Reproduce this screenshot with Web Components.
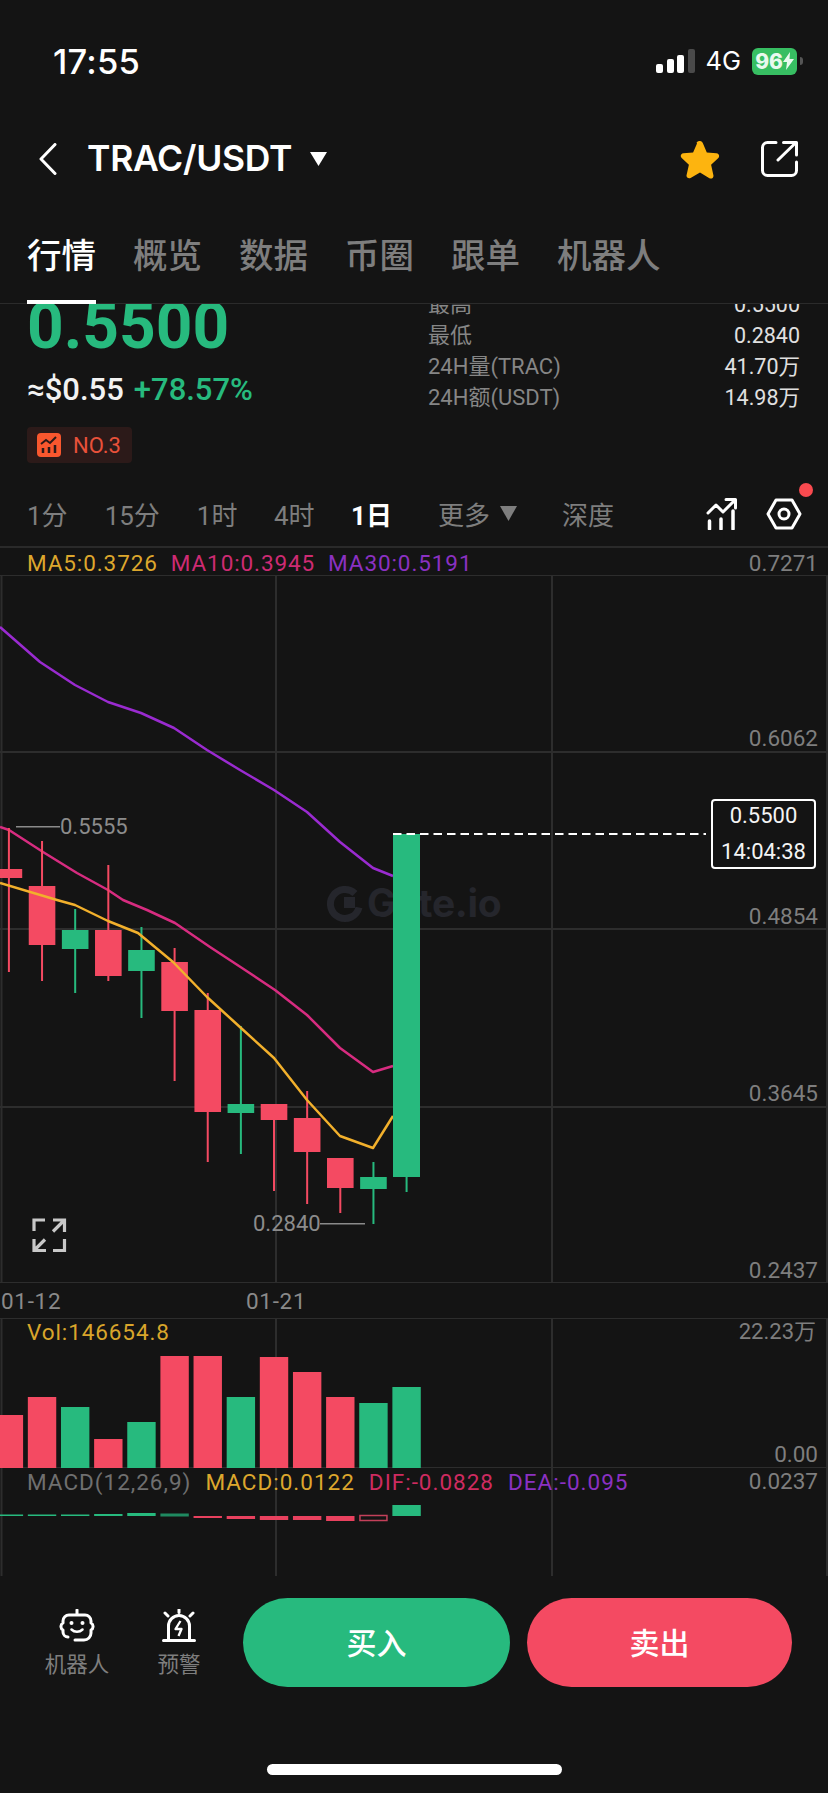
<!DOCTYPE html>
<html lang="zh">
<head>
<meta charset="utf-8">
<title>TRAC/USDT</title>
<style>
html,body{margin:0;padding:0;background:#141414}
body{width:828px;height:1793px;overflow:hidden;font-family:Roboto,"Noto Sans CJK SC",sans-serif;color:#fff}
</style>
</head>
<body>
<app-screen>
  <status-bar></status-bar>
  <nav-bar pair="TRAC/USDT"></nav-bar>
  <tab-bar></tab-bar>
  <price-head></price-head>
  <period-bar></period-bar>
  <ma-legend></ma-legend>
  <main-chart></main-chart>
  <date-axis></date-axis>
  <vol-chart></vol-chart>
  <macd-chart></macd-chart>
  <action-bar></action-bar>
  <home-bar></home-bar>
</app-screen>
<script>
const RED='#F44A62',GREEN='#27BA7E',GRID='#2D2D2D';
const CX=i=>8.9+33.14*i;
function def(name,html,after){
  customElements.define(name,class extends HTMLElement{
    connectedCallback(){
      if(this.shadowRoot)return;
      const r=this.attachShadow({mode:'open'});
      r.innerHTML=html;
      if(after)after(r,this);
    }
  });
}
const grid=(h,ys=[])=>{
  let s='';
  [1.5,276,552,827].forEach(x=>s+=`<rect x="${x-1}" y="0" width="2" height="${h}" fill="${GRID}"/>`);
  ys.forEach(y=>s+=`<rect x="0" y="${y-1}" width="828" height="2" fill="${GRID}"/>`);
  return s;
};
const poly=(pts,c)=>`<polyline fill="none" stroke="${c}" stroke-width="2.500" stroke-linejoin="round" points="${pts.map(p=>p.join(',')).join(' ')}"/>`;

def('app-screen',`<style>:host{display:flex;flex-direction:column;width:828px;height:1793px;background:#141414;overflow:hidden}</style><slot></slot>`);

def('status-bar',`<style>
:host{display:flex;align-items:center;justify-content:space-between;height:108px;padding:14px 25px 0 53px;box-sizing:border-box;font-family:Inter,sans-serif;color:#fff}
.t{font-size:34.500px;font-weight:500;letter-spacing:.2px}
.r{display:flex;align-items:center;gap:0}
.sig{display:flex;align-items:flex-end;gap:3.5px;height:24px;margin-right:11px}
.sig i{display:block;width:7px;border-radius:2px;background:#fff}
.g{font-size:25.5px;font-weight:400;margin-right:11px;line-height:24px}
.bat{width:45px;height:27px;border-radius:6px;background:#37BE62;display:flex;align-items:center;justify-content:center;font-size:21px;font-weight:800;color:#e9f9ee;gap:0;letter-spacing:-.2px}
.nub{width:3px;height:8px;background:#555;border-radius:0 3px 3px 0;margin-left:3px}
</style>
<span class="t">17:55</span>
<div class="r">
<div class="sig"><i style="height:9px"></i><i style="height:14px"></i><i style="height:18px"></i><i style="height:24px;background:#4a4a4a"></i></div>
<span class="g">4G</span>
<div class="bat">96<svg width="11" height="18" viewBox="0 0 11 18"><path d="M7 0 0 10h4l-1 8 8-11H6.500z" fill="#e9f9ee"/></svg></div><span class="nub"></span>
</div>`);

def('nav-bar',`<style>
:host{display:flex;align-items:center;height:104px;padding:0 30px 2px 39px;box-sizing:border-box}
.ttl{font-family:Inter,sans-serif;font-size:35.500px;font-weight:600;margin:0 18px 0 30px;letter-spacing:-.3px;line-height:40px}
.sp{flex:1}
svg{display:block}
</style>
<svg width="18" height="32" viewBox="0 0 18 32"><path d="M16 1.500 2 16l14 14.500" fill="none" stroke="#fff" stroke-width="3" stroke-linecap="round" stroke-linejoin="round"/></svg>
<span class="ttl"></span>
<svg width="17" height="14" viewBox="0 0 17 14"><path d="M0 0h17L8.500 14z" fill="#fff"/></svg>
<span class="sp"></span>
<svg width="40" height="39" viewBox="0 0 40 39" style="margin-right:41px"><path d="M20 1c1.500 0 2.400 1 3 2.400l3.800 9 9.600.9c2.700.3 3.700 3 1.700 4.900l-7 6.500 2.300 10.600c.5 2.700-2 4-4 2.900L20 32.500 10.600 38c-2.200 1.100-4.600-.5-4-2.900l2.300-10.400-7.200-6.600c-1.800-1.800-.9-4.600 1.700-4.800l9.700-.9 3.900-9C15.600 2 18.500 1 20 1z" fill="#FDB40F"/></svg>
<svg width="37" height="36" viewBox="0 0 37 36"><path d="M15 1.500H6.500a5 5 0 0 0-5 5v23a5 5 0 0 0 5 5h24a5 5 0 0 0 5-5V21" fill="none" stroke="#fff" stroke-width="3" stroke-linecap="round"/><path d="M17 19 35 1.500M22.500 1.500H35.500V14" fill="none" stroke="#fff" stroke-width="3" stroke-linecap="round" stroke-linejoin="round"/></svg>`,
(r,h)=>{r.querySelector('.ttl').textContent=h.getAttribute('pair')});

def('tab-bar',`<style>
:host{display:flex;gap:37px;height:92px;padding:0 0 0 27px;box-sizing:border-box;border-bottom:1px solid #2b2b2b;font-size:34.500px;font-weight:500;color:#7e7e7e;font-family:"Noto Sans CJK SC",sans-serif;position:relative;z-index:2;background:#141414}
span{display:block;line-height:50px;padding-top:16px;height:76px;position:relative;white-space:nowrap}
.on{color:#fff}
.on::after{content:"";position:absolute;left:0;right:0;bottom:0;height:4px;background:#fff}
</style>
<span class="on">行情</span><span>概览</span><span>数据</span><span>币圈</span><span>跟单</span><span>机器人</span>`);

def('price-head',`<style>
:host{display:flex;height:171px;overflow:hidden;padding:0 28px 0 27px;box-sizing:border-box;justify-content:space-between}
.l{display:flex;flex-direction:column;align-items:flex-start}
.p{font-size:64px;font-weight:700;color:${GREEN};line-height:60px;margin-top:-7px;height:60px}
.sub{display:flex;gap:10px;align-items:baseline;font-size:31px;line-height:40px;margin-top:13px;white-space:nowrap}
.usd{color:#f2f2f2;font-weight:500}.ch{color:${GREEN};font-weight:500}
.badge{display:flex;align-items:center;gap:12px;margin-top:17px;height:36px;width:105px;box-sizing:border-box;padding-left:10px;background:#2C1A19;border-radius:4px;color:#E8513A;font-size:22px}
.r{width:372px;margin-top:-15px;font-size:22px}
.row{display:flex;justify-content:space-between;height:31px;line-height:31px;color:#868686}
.row b{font-weight:400;color:#e0e0e0;font-size:21.500px}
svg{display:block}
</style>
<div class="l">
<div class="p">0.5500</div>
<div class="sub"><span class="usd">≈$0.55</span><span class="ch">+78.57%</span></div>
<div class="badge"><svg width="24" height="24" viewBox="0 0 24 24"><rect width="24" height="24" rx="4" fill="#F9572E"/><path d="M4 11l5-4 4 3 6-6" fill="none" stroke="#2C1A19" stroke-width="2"/><path d="M6 20v-5M12 20v-6M18 20v-8" stroke="#2C1A19" stroke-width="2.500"/></svg><span>NO.3</span></div>
</div>
<div class="r">
<div class="row"><span>最高</span><b>0.5500</b></div>
<div class="row"><span>最低</span><b>0.2840</b></div>
<div class="row"><span>24H量(TRAC)</span><b>41.70万</b></div>
<div class="row"><span>24H额(USDT)</span><b>14.98万</b></div>
</div>`);

def('period-bar',`<style>
:host{display:flex;align-items:center;height:73px;box-sizing:border-box;border-bottom:2px solid #2a2a2a;padding:6px 0 0 27px;font-size:26px;color:#7e7e7e;position:relative;white-space:nowrap}
.i{margin-right:37px}
.i.n{margin-right:36.500px}
.on{color:#fff;font-weight:700;margin-right:46px}
.more{display:flex;align-items:center;gap:10px;margin-right:45px}
.sp{flex:1}
.dot{position:absolute;left:799px;top:8px;width:14px;height:14px;border-radius:50%;background:#F94A4F}
svg{display:block}
</style>
<span class="i">1分</span><span class="i">15分</span><span class="i n">1时</span><span class="i n">4时</span><span class="on">1日</span>
<span class="more">更多<svg width="17" height="15" viewBox="0 0 17 15"><path d="M0 0h17L8.500 15z" fill="#7e7e7e"/></svg></span>
<span>深度</span><span class="sp"></span>
<svg width="31" height="32" viewBox="0 0 31 32" style="margin-right:29px"><path d="M2 15 10 7l7 7L29 2M20 1.500h9.500V10" fill="none" stroke="#fff" stroke-width="3" stroke-linejoin="round" stroke-linecap="round"/><path d="M3.500 23v8M15 21v10M27 13v18" stroke="#fff" stroke-width="3.500" stroke-linecap="round"/></svg>
<svg width="36" height="32" viewBox="0 0 36 32" style="margin-right:26px"><path d="M10 2h16l8 14-8 14H10L2 16z" fill="none" stroke="#fff" stroke-width="3" stroke-linejoin="round"/><circle cx="18" cy="16" r="5" fill="none" stroke="#fff" stroke-width="3"/></svg>
<span class="dot"></span>`);

def('ma-legend',`<style>
:host{display:flex;align-items:center;height:27px;padding:2px 10px 0 27px;font-size:22.500px;white-space:nowrap;gap:13px;box-sizing:border-box}
span{letter-spacing:.9px}
.sp{flex:1}
</style>
<span style="color:#DDA72D">MA5:0.3726</span><span style="color:#CE2B73">MA10:0.3945</span><span style="color:#8B31C2">MA30:0.5191</span><span class="sp"></span><span style="color:#7e7e7e;letter-spacing:0">0.7271</span>`);

/* ---- main candlestick panel: a free canvas, page y = 575 + local y ---- */
const candles=[
 ['r',828,972,869,878],['r',841,981,886,945],['g',909,993,930,949],['r',865,981,930,976],
 ['g',927,1018,950,971],['r',948,1081,962,1011],['r',993,1162,1010,1112],['g',1026,1154,1104,1113],
 ['r',1104,1191,1104,1120],['r',1091,1204,1118,1152],['r',1158,1213,1158,1188],['g',1162,1224,1177,1189],
 ['g',834,1192,834,1177]];
const O=575;
const L=a=>a.map(p=>[p[0],p[1]-O]);
const ma30=L([[0,627],[40,662],[75,685],[108,702],[141,713],[174,728],[207,750],[240,770],[274,790],[307,812],[340,842],[373,868],[393,876]]);
const ma10=L([[0,827],[9,830],[43,852],[77,873],[108,890],[123,900],[147,910],[175,923],[210,947],[242,968],[275,990],[307,1015],[340,1048],[373,1072],[393,1066]]);
const ma5=L([[0,883],[57,900],[75,905],[108,921],[138,933],[173,962],[207,997],[241,1028],[274,1058],[307,1100],[340,1136],[373,1148],[393,1116]]);
function mainSvg(){
  let s=`<svg width="828" height="708" viewBox="0 0 828 708">`+grid(708,[0,177,354,532,708]);
  /* watermark logo */
  s+=`<path d="M355 318.500a14.500 14.500 0 1 0 4 14" fill="none" stroke="#25262C" stroke-width="7"/><rect x="344" y="322" width="11" height="11" fill="#25262C"/>`;
  s+=poly(ma30,'#9A2BD0')+poly(ma10,'#D72C80');
  candles.forEach((c,i)=>{
    const x=CX(i),col=c[0]=='r'?RED:GREEN;
    s+=`<rect x="${x-1}" y="${c[1]-O}" width="2" height="${c[2]-c[1]}" fill="${col}"/>`;
    s+=`<rect x="${x-13.3}" y="${c[3]-O}" width="26.600" height="${c[4]-c[3]}" fill="${col}"/>`;
  });
  s+=poly(ma5,'#F2B02C');
  s+=`<rect x="393" y="${candles[12][3]-O}" width="27" height="343" fill="${GREEN}"/>`;
  s+=`<line x1="393" x2="706" y1="259" y2="259" stroke="#fff" stroke-width="2" stroke-dasharray="8.500 5"/>`;
  s+=`<rect x="16" y="251" width="44" height="1.500" fill="#8a8a8a"/><rect x="320" y="648" width="45" height="1.500" fill="#8a8a8a"/>`;
  /* expand icon */
  s+=`<g fill="none" stroke="#c8c8c8" stroke-width="3.200"><path d="M34 656V645H45M53 645H64.500V657M64.500 645 53 656.500M34 664V675.500H46M34 675.500 45 664.500M64.500 664V675.500H53"/></g>`;
  return s+`</svg>`;
}
def('main-chart',`<style>
:host{display:block;position:relative;height:708px;width:828px;font-size:22.500px;color:#7e7e7e}
svg{position:absolute;left:0;top:0;display:block}
.a{position:absolute;right:10px;line-height:26px;white-space:nowrap}
.m{position:absolute;line-height:26px;color:#8c8c8c;font-size:22px}
.wm{position:absolute;left:367px;top:306px;font:700 39px/44px Inter,sans-serif;color:#25262C;letter-spacing:-.3px;white-space:nowrap}
.box{position:absolute;left:711px;top:224px;width:105px;height:70px;box-sizing:border-box;border:2px solid #fff;border-radius:4px;background:#141414;color:#f4f4f4;display:flex;flex-direction:column;align-items:center;justify-content:center;font-size:22px;line-height:36px}
</style>
<div class="wm">Gate.io</div>
<div id="c"></div>
<span class="a" style="top:150px">0.6062</span>
<span class="a" style="top:328px">0.4854</span>
<span class="a" style="top:505px">0.3645</span>
<span class="a" style="top:682px">0.2437</span>
<span class="m" style="left:60px;top:239px">0.5555</span>
<span class="m" style="left:253px;top:636px">0.2840</span>
<div class="box"><span>0.5500</span><span>14:04:38</span></div>`,
r=>{const t=document.createElement('template');t.innerHTML=mainSvg();r.getElementById('c').replaceWith(t.content);});

def('date-axis',`<style>
:host{display:flex;height:35px;align-items:center;font-size:22.500px;letter-spacing:.7px;color:#8a8a8a;padding:1px 0 0 1px;box-sizing:border-box}
span{line-height:34px}
</style><span style="width:245px">01-12</span><span>01-21</span>`);

const vols=[['r',1415],['r',1397],['g',1407],['r',1439],['g',1422],['r',1356],['r',1356],['g',1397],['r',1357],['r',1372],['r',1397],['g',1403],['g',1387]];
def('vol-chart',`<style>
:host{display:block;position:relative;height:150px;width:828px;font-size:22.500px}
svg{position:absolute;left:0;top:0;display:block}
.v{position:absolute;left:27px;top:1px;line-height:26px;color:#D9A52B;letter-spacing:.9px}
.a{position:absolute;right:12px;color:#7e7e7e;line-height:26px}
</style>
<div id="c"></div><span class="v">Vol:146654.8</span>
<span class="a" style="top:1px;font-size:22px">22.23万</span><span class="a" style="top:123px;right:10px">0.00</span>`,
r=>{
  let s=`<svg width="828" height="150" viewBox="0 0 828 150">`+grid(150,[0,150]);
  vols.forEach((v,i)=>{const x=CX(i);s+=`<rect x="${x-14.2}" y="${v[1]-1318}" width="28.400" height="${1468-v[1]}" fill="${v[0]=='r'?RED:GREEN}"/>`});
  const t=document.createElement('template');t.innerHTML=s+'</svg>';r.getElementById('c').replaceWith(t.content);
});

const macd=[[1514.5,1516,'g'],[1514.5,1516,'g'],[1514.5,1516,'g'],[1514,1516,'g'],[1513,1516,'g'],[1513.5,1516.5,'d'],
 [1516,1518,'r'],[1516,1519,'r'],[1516,1520,'r'],[1516,1520,'r'],[1516,1521,'r'],[1515.5,1520.5,'h'],[1505,1516,'g']];
def('macd-chart',`<style>
:host{display:block;position:relative;height:108px;width:828px;font-size:22.500px}
svg{position:absolute;left:0;top:0;display:block}
.l{position:absolute;left:27px;top:1px;display:flex;gap:14px;line-height:26px;letter-spacing:1px;white-space:nowrap}
.a{position:absolute;right:10px;top:0;color:#7e7e7e;line-height:26px}
</style>
<div id="c"></div>
<div class="l"><span style="color:#6f6f6f">MACD(12,26,9)</span><span style="color:#DDA72D">MACD:0.0122</span><span style="color:#CE2B60">DIF:-0.0828</span><span style="color:#8B31C2">DEA:-0.095</span></div>
<span class="a">0.0237</span>`,
r=>{
  let s=`<svg width="828" height="108" viewBox="0 0 828 108">`+grid(108);
  macd.forEach((m,i)=>{const x=CX(i),y=m[0]-1468,h=m[1]-m[0];
    if(m[2]=='h')s+=`<rect x="${x-13.5}" y="${y}" width="27" height="${h}" fill="none" stroke="#C4405A" stroke-width="1.500"/>`;
    else s+=`<rect x="${x-14.2}" y="${y}" width="28.400" height="${h}" fill="${m[2]=='r'?'#E8415E':m[2]=='d'?'#1F8A60':GREEN}"/>`;
  });
  const t=document.createElement('template');t.innerHTML=s+'</svg>';r.getElementById('c').replaceWith(t.content);
});

def('action-bar',`<style>
:host{display:flex;align-items:flex-start;height:188px;padding-top:22px;box-sizing:border-box}
.it{display:flex;flex-direction:column;align-items:center;width:70px;font-size:21.500px;color:#7e7e7e;line-height:30px}
.it svg{display:block;margin-bottom:8px;margin-top:11px}
.b{height:89px;border-radius:44.500px;display:flex;align-items:center;justify-content:center;font-size:30px;font-weight:500;color:#fff;box-sizing:border-box;padding-bottom:4px}
</style>
<div class="it" style="margin-left:42px"><svg width="36" height="33" viewBox="0 0 36 33"><path d="M18 1v5M10 6h16a6 6 0 0 1 6 6v2h0a3.500 3.500 0 0 1 2 3v1a3.500 3.500 0 0 1-2 3v3a7 7 0 0 1-7 7H16M9 28a5 5 0 0 1-5-5v-2a3.500 3.500 0 0 1-2-3v-1a3.500 3.500 0 0 1 2-3v-2a6 6 0 0 1 6-6" fill="none" stroke="#fff" stroke-width="3" stroke-linecap="round" stroke-linejoin="round"/><circle cx="12.500" cy="14" r="2" fill="#fff"/><circle cx="23.500" cy="14" r="2" fill="#fff"/><path d="M12.500 20.500c3 3 8 3 11 0" fill="none" stroke="#fff" stroke-width="2.500" stroke-linecap="round"/></svg>机器人</div>
<div class="it" style="margin-left:32px"><svg width="34" height="33" viewBox="0 0 34 33"><path d="M1.500 31.500h31M6.500 31V17a10.500 10.500 0 0 1 21 0v14" fill="none" stroke="#fff" stroke-width="3" stroke-linecap="round"/><path d="M17 0v3.500M3 4l3 3M31 4l-3 3" stroke="#fff" stroke-width="3" stroke-linecap="round"/><path d="M18.500 12 13.500 20h6l-3 7" fill="none" stroke="#fff" stroke-width="2.300" stroke-linejoin="round"/></svg>预警</div>
<div class="b" style="width:267px;background:${GREEN};margin-left:29px">买入</div>
<div class="b" style="width:265px;background:${RED};margin-left:17px">卖出</div>`);

def('home-bar',`<style>
:host{display:flex;justify-content:center;height:11px}
i{display:block;width:295px;height:11px;border-radius:5.500px;background:#fff;margin-right:-1px}
</style><i></i>`);
</script>
</body>
</html>
